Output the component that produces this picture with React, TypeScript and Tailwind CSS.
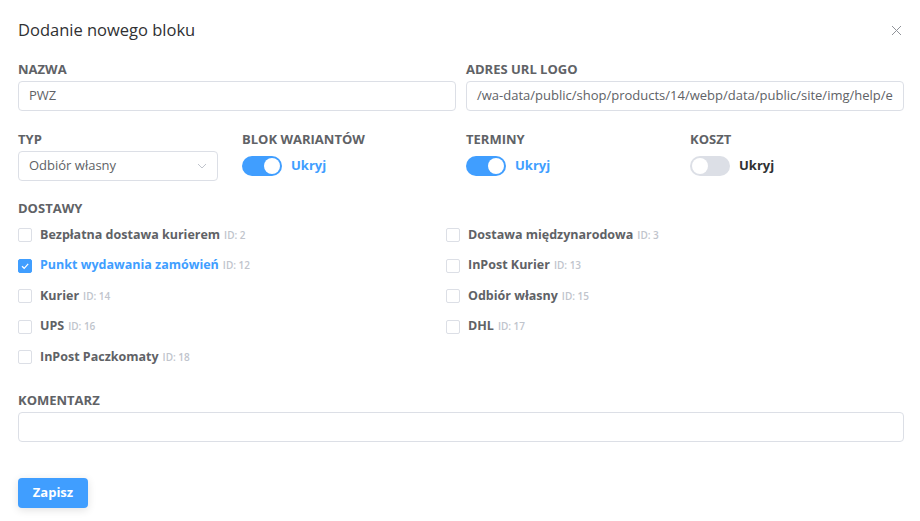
import React from "react";

const F = { fontFamily: '"Open Sans", "Noto Sans", sans-serif' };

function Toggle({ on }: { on: boolean }) {
  return (
    <div className="flex items-center gap-[9px] h-[30px]">
      <div
        className={
          on
            ? "w-[40px] h-[20px] rounded-full bg-[#409eff] flex items-center justify-end px-[2px]"
            : "w-[40px] h-[20px] rounded-full bg-[#dcdfe6] flex items-center justify-start px-[2px]"
        }
      >
        <div className="w-[16px] h-[16px] rounded-full bg-white" />
      </div>
      <span className={on ? "text-[13px] font-bold text-[#409eff]" : "text-[13px] font-bold text-[#303133]"}>Ukryj</span>
    </div>
  );
}

function Check({ label, id, checked }: { label: string; id: number; checked?: boolean }) {
  return (
    <div className="flex items-center h-[30.5px]">
      <div
        className={
          checked
            ? "w-[14px] h-[14px] rounded-[2px] bg-[#409eff] border border-[#409eff] flex items-center justify-center"
            : "w-[14px] h-[14px] rounded-[2px] bg-white border border-[#dcdfe6]"
        }
      >
        {checked && (
          <svg width="10" height="10" viewBox="0 0 10 10">
            <path d="M2 5.2 L4.2 7.3 L8.2 2.8" fill="none" stroke="white" strokeWidth="1.2" />
          </svg>
        )}
      </div>
      <span className={checked ? "ml-[8px] text-[12.5px] font-bold text-[#409eff]" : "ml-[8px] text-[12.5px] font-bold text-[#606266]"}>
        {label}
      </span>
      <span className="ml-[4px] text-[10px] font-semibold text-[#c0c4cc]">ID: {id}</span>
    </div>
  );
}

const labelCls = "text-[13px] font-bold text-[#606266] leading-[15px] mb-[4px]";
const inputCls =
  "h-[30px] w-full border border-[#dcdfe6] rounded-[4px] px-[10px] flex items-center text-[13px] text-[#606266] bg-white overflow-hidden whitespace-nowrap";

export default function App() {
  return (
    <div className="w-[920px] h-[521px] bg-white overflow-hidden" style={F}>
      <div className="pl-[18px] pr-[16px] pt-[18px]">
        <div className="flex items-center justify-between h-[24px]">
          <span className="text-[16.5px] text-[#303133]">Dodanie nowego bloku</span>
          <svg width="11" height="11" viewBox="0 0 11 11" className="mr-[2px]">
            <path d="M1 1 L10 10 M10 1 L1 10" stroke="#909399" strokeWidth="1" />
          </svg>
        </div>

        <div className="grid grid-cols-2 gap-x-[10px] mt-[20px]">
          <div>
            <div className={labelCls}>NAZWA</div>
            <div className={inputCls}>PWZ</div>
          </div>
          <div>
            <div className={labelCls}>ADRES URL LOGO</div>
            <div className={inputCls}>/wa-data/public/shop/products/14/webp/data/public/site/img/help/e</div>
          </div>
        </div>

        <div className="grid grid-cols-4 gap-x-[10px] mt-[21px]">
          <div>
            <div className={labelCls}>TYP</div>
            <div className="h-[30px] w-[200px] border border-[#dcdfe6] rounded-[4px] pl-[10px] pr-[10px] flex items-center justify-between text-[13px] text-[#606266]">
              <span>Odbiór własny</span>
              <svg width="10" height="6" viewBox="0 0 10 6">
                <path d="M1 1 L5 5 L9 1" fill="none" stroke="#c0c4cc" strokeWidth="1" />
              </svg>
            </div>
          </div>
          <div>
            <div className={labelCls}>BLOK WARIANTÓW</div>
            <Toggle on />
          </div>
          <div>
            <div className={labelCls}>TERMINY</div>
            <Toggle on />
          </div>
          <div>
            <div className={labelCls}>KOSZT</div>
            <Toggle on={false} />
          </div>
        </div>

        <div className={labelCls + " mt-[20px]"}>DOSTAWY</div>
        <div className="grid grid-cols-[428px_1fr] mt-[2px]">
          <Check label="Bezpłatna dostawa kurierem" id={2} />
          <Check label="Dostawa międzynarodowa" id={3} />
          <Check label="Punkt wydawania zamówień" id={12} checked />
          <Check label="InPost Kurier" id={13} />
          <Check label="Kurier" id={14} />
          <Check label="Odbiór własny" id={15} />
          <Check label="UPS" id={16} />
          <Check label="DHL" id={17} />
          <Check label="InPost Paczkomaty" id={18} />
        </div>

        <div className={labelCls + " mt-[20px]"}>KOMENTARZ</div>
        <div className={inputCls}></div>

        <button className="mt-[36px] h-[30px] w-[70px] rounded-[4px] bg-[#409eff] text-white text-[13px] font-bold shadow-[0_2px_8px_rgba(0,0,0,0.12)]">
          Zapisz
        </button>
      </div>
    </div>
  );
}
